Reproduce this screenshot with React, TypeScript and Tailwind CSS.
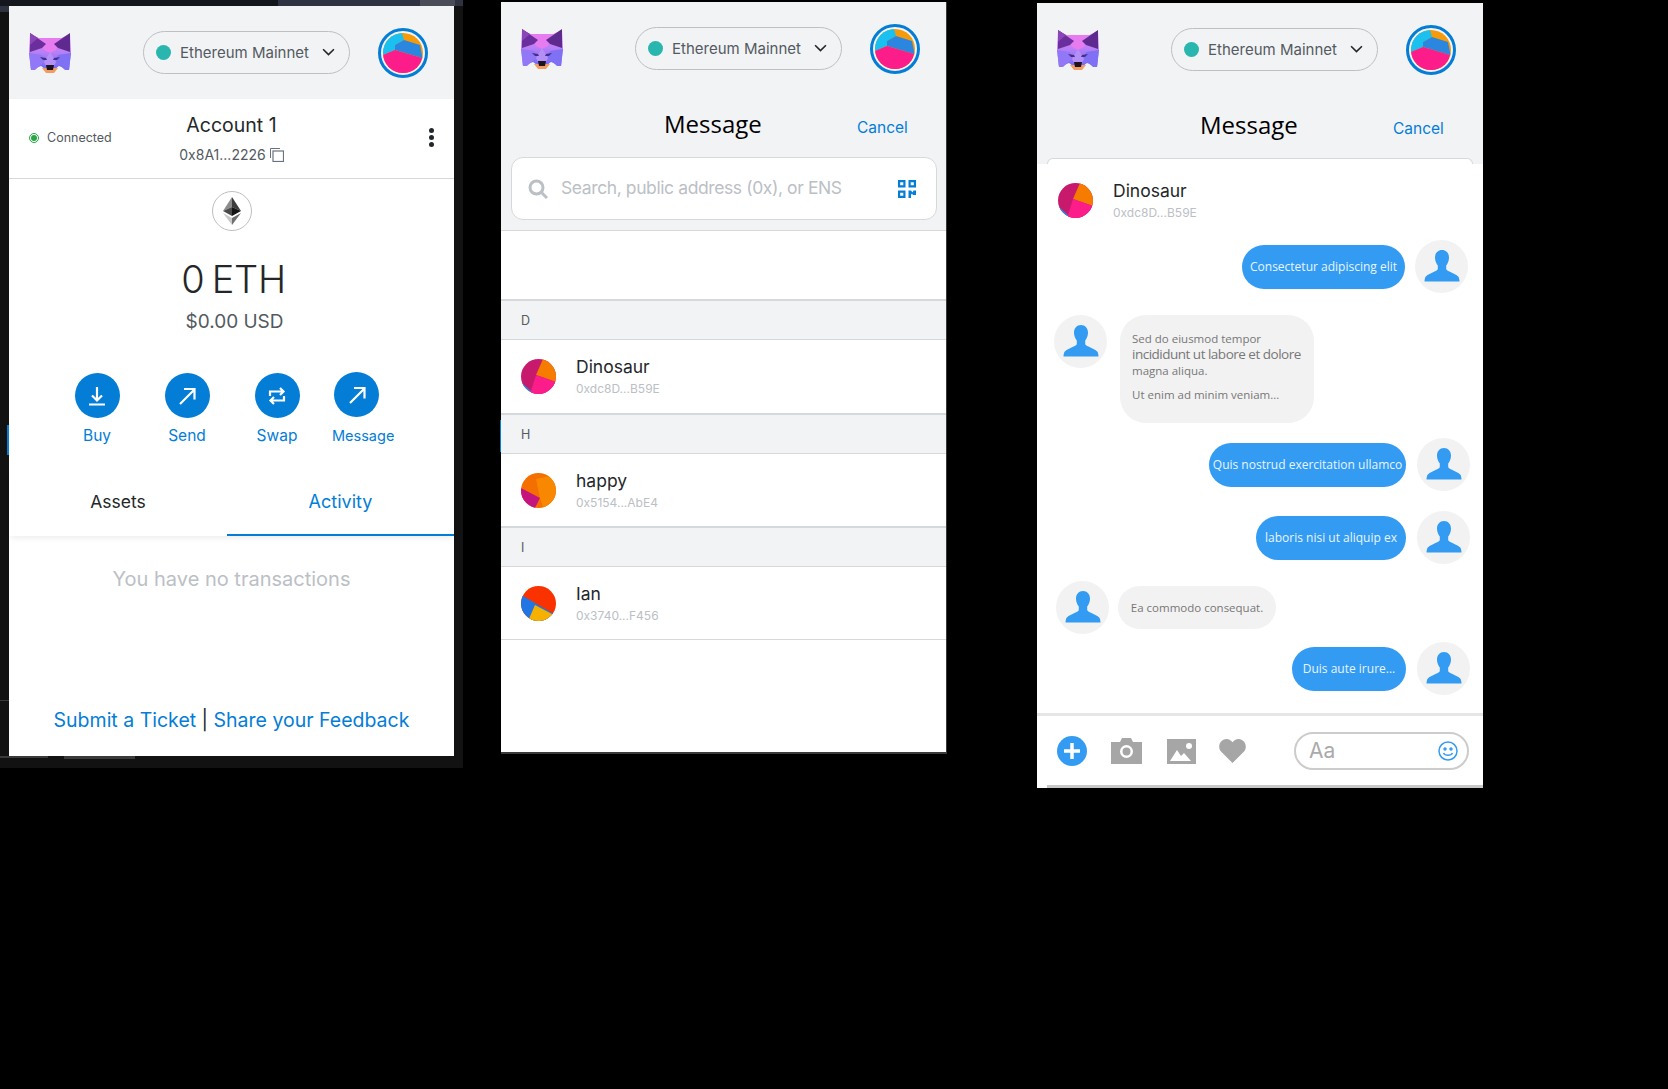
import type { ReactNode } from "react";

const SANS = "font-['Inter',sans-serif]";

function FoxLogo({ id }: { id: string }) {
  return (
    <svg viewBox="0 0 42 40" className="h-[40px] w-[42px] shrink-0">
      <defs>
        <linearGradient id={id} x1="0" y1="0" x2="0" y2="1">
          <stop offset="0" stopColor="#ee7cf0" />
          <stop offset="0.5" stopColor="#b880f6" />
          <stop offset="1" stopColor="#6d68f6" />
        </linearGradient>
      </defs>
      <polygon points="1,1 14,7 28,7 41,1 42,19 40,37 30,33 26,36 16,36 12,33 2,37 0,19" fill={`url(#${id})`} />
      <polygon points="9,5 33,5 27,17 21,20 15,17" fill="#e67cf0" />
      <polygon points="1,0 17,11 13,15 1,19" fill="#6a2f9c" />
      <polygon points="1,0 9,5 1,12" fill="#8a45b8" />
      <polygon points="41,0 25,11 29,15 41,19" fill="#5f2a90" />
      <polygon points="0,20 13,22 15,29 6,37 2,37" fill="#9278f6" />
      <polygon points="42,20 29,22 27,29 36,37 40,37" fill="#7f70f4" />
      <polygon points="15,29 21,19 27,29 25,33 17,33" fill="#b490f6" />
      <polygon points="11,24 17,25 18,27 14,27" fill="#43308c" />
      <polygon points="31,24 25,25 24,27 28,27" fill="#43308c" />
      <polygon points="13,35 29,35 25,40 17,40" fill="#f29c62" />
      <polygon points="17,32 25,32 24,37 18,37" fill="#1b1320" />
    </svg>
  );
}

function AccountIcon() {
  return (
    <div className="flex h-[50px] w-[50px] shrink-0 items-center justify-center rounded-full border-[3px] border-[#037dd6]">
      <svg viewBox="0 0 40 40" className="h-[40px] w-[40px] rounded-full">
        <rect width="40" height="40" fill="#f59a0a" />
        <polygon points="0,0 19,0 21,7 12,12 12,17 0,22" fill="#1ac0f0" />
        <polygon points="12,12 21,7 37,12 40,27 39,25 12,17" fill="#2b86e0" />
        <polygon points="0,22 12,17 39,25 35,40 0,40" fill="#fc1c8a" />
      </svg>
    </div>
  );
}

function WalletHeader({ id }: { id: string }) {
  return (
    <div className="flex h-[93px] shrink-0 items-center pl-[20px]">
      <FoxLogo id={id} />
      <div className={`ml-[72px] flex h-[43px] w-[207px] shrink-0 items-center rounded-full border border-[#bbc0c5] pl-[12px] ${SANS}`}>
        <span className="h-[15px] w-[15px] rounded-full bg-[#29b6af]" />
        <span className="ml-[9px] pt-[2px] text-[15px] text-[#535a61]">Ethereum Mainnet</span>
        <svg viewBox="0 0 12 8" className="ml-[13px] h-[9px] w-[13px]" fill="none" stroke="#24272a" strokeWidth="1.500">
          <path d="M1 1l5 5 5-5" />
        </svg>
      </div>
      <div className="ml-[28px]">
        <AccountIcon />
      </div>
    </div>
  );
}

function EthBadge() {
  return (
    <div className="flex h-[40px] w-[40px] items-center justify-center rounded-full border border-[#bbc0c5]">
      <svg viewBox="0 0 18 28" className="h-[28px] w-[18px]">
        <polygon points="9,0 0,14 9,10" fill="#8c8c8c" />
        <polygon points="9,0 18,14 9,10" fill="#3c3c3d" />
        <polygon points="0,14 9,10 9,19" fill="#4a4a4a" />
        <polygon points="18,14 9,10 9,19" fill="#141414" />
        <polygon points="0,16 9,28 9,21" fill="#c8c8c8" />
        <polygon points="18,16 9,28 9,21" fill="#6e6e6e" />
      </svg>
    </div>
  );
}

function ActionCircle({ children }: { children: ReactNode }) {
  return (
    <div className="flex h-[45px] w-[45px] items-center justify-center rounded-full bg-[#037dd6]">
      <svg viewBox="0 0 24 24" className="h-[24px] w-[24px]" fill="none" stroke="#fff" strokeWidth="2.200">
        {children}
      </svg>
    </div>
  );
}

const arrowSend = <path d="M5 20L19 6M9 5h10.500v10.500" />;

function WalletAction({ label, children }: { label: string; children: ReactNode }) {
  return (
    <div className="flex w-[90px] flex-col items-center">
      <ActionCircle>{children}</ActionCircle>
      <span className="mt-[9px] text-[15.500px] leading-[18px] text-[#037dd6]">{label}</span>
    </div>
  );
}

function WalletPanel() {
  return (
    <div className="relative h-[768px] w-[463px] shrink-0 bg-[#121212]">
      <div className="flex h-[6px]">
        <div className="w-[278px] bg-[#14161d]" />
        <div className="w-[142px] bg-[#2f3240]" />
        <div className="w-[35px] bg-[#4a4c57]" />
        <div className="w-[8px] bg-[#2f3240]" />
      </div>
      <div className="absolute left-0 top-[6px] h-[6px] w-[9px] bg-[#2f3240]" />
      <div className="absolute left-[7px] top-[425px] h-[30px] w-[2px] bg-[#037dd6]" />
      <div className="absolute left-0 top-[700px] h-px w-[9px] bg-[#3a3a3a]" />
      <div className="absolute left-0 top-[756px] h-[2px] w-[48px] bg-[#3a3a3a]" />
      <div className="absolute left-[64px] top-[756px] h-[3px] w-[71px] bg-[#3a3a3a]" />

      <div className={`ml-[9px] flex h-[750px] w-[445px] flex-col bg-white ${SANS}`}>
        <div className="bg-[#f2f3f5]">
          <WalletHeader id="fox-a" />
        </div>

        <div className="relative flex h-[80px] shrink-0 flex-col items-center border-b border-[#d6d9dc] pt-[14px]">
          <span className="text-[19.500px] leading-[24px] text-[#24272a]">Account 1</span>
          <span className="mt-[9px] flex items-center text-[14px] leading-[18px] text-[#535a61]">
            0x8A1...2226
            <svg viewBox="0 0 14 14" className="ml-[4px] h-[14px] w-[14px]" fill="none" stroke="#6a737d" strokeWidth="1">
              <path d="M.5 10V.5H10" />
              <rect x="3" y="3" width="10.500" height="10.500" strokeWidth="1.200" />
            </svg>
          </span>
          <div className="absolute left-[20px] top-[34px] flex items-center">
            <span className="flex h-[10px] w-[10px] items-center justify-center rounded-full border border-[#28a745]">
              <span className="h-[6px] w-[6px] rounded-full bg-[#28a745]" />
            </span>
            <span className="ml-[8px] text-[12.500px] leading-[10px] text-[#535a61]">Connected</span>
          </div>
          <div className="absolute left-[420px] top-[29px] flex flex-col gap-[2px]">
            <span className="h-[5px] w-[5px] rounded-full bg-[#24272a]" />
            <span className="h-[5px] w-[5px] rounded-full bg-[#24272a]" />
            <span className="h-[5px] w-[5px] rounded-full bg-[#24272a]" />
          </div>
        </div>

        <div className="flex flex-col items-center pt-[12px]">
          <EthBadge />
          <span className="ml-[4px] mt-[25px] text-[38px] font-light leading-[46px] tracking-[-0.3px] text-[#24272a] [word-spacing:-3px]">0 ETH</span>
          <span className="ml-[6px] mt-[8px] text-[19px] leading-[24px] text-[#535a61]">$0.00 USD</span>
        </div>

        <div className="mt-[39px] flex pl-[43px]">
          <WalletAction label="Buy">
            <path d="M12 3v13M7 11.500l5 5 5-5M4 20.500h16" />
          </WalletAction>
          <WalletAction label="Send">{arrowSend}</WalletAction>
          <WalletAction label="Swap">
            <path d="M5 12V7.500h12.500M15 4l3.500 3.500L15 11M19 12v4.500H6.500M9 20l-3.500-3.500L9 13" />
          </WalletAction>
          <div className="flex -translate-y-px flex-col items-start">
            <div className="ml-[12px]">
              <ActionCircle>{arrowSend}</ActionCircle>
            </div>
            <span className="ml-[10px] mt-[10px] text-[14.500px] leading-[18px] text-[#037dd6]">Message</span>
          </div>
        </div>

        <div className="mt-[24px] flex h-[66px] shrink-0 shadow-[0_4px_6px_-2px_rgba(0,0,0,0.08)]">
          <div className="flex w-[218px] items-center justify-center pb-[2px] text-[17.500px] text-[#24272a]">Assets</div>
          <div className="flex flex-1 items-center justify-center border-b-2 border-[#037dd6] pb-[2px] text-[18px] text-[#037dd6]">
            Activity
          </div>
        </div>

        <div className="mt-[30px] text-center text-[20px] leading-[26px] text-[#bbc0c5]">You have no transactions</div>

        <div className="mt-auto mb-[24px] text-center text-[19.500px] leading-[24px] text-[#037dd6]">
          Submit a Ticket <span className="text-[#24272a]">|</span> Share your Feedback
        </div>
      </div>
    </div>
  );
}

function DinoAvatar() {
  return (
    <svg viewBox="0 0 35 35" className="h-[35px] w-[35px] shrink-0 rounded-full">
      <rect width="35" height="35" fill="#c81a6d" />
      <polygon points="22,0 35,0 35,23 15,16" fill="#f67c00" />
      <polygon points="15,16 35,23 35,35 10,35 10,32" fill="#fc1c8a" />
      <polygon points="0,23 10,32 10,35 0,35" fill="#2b86e0" />
    </svg>
  );
}

function HappyAvatar() {
  return (
    <svg viewBox="0 0 35 35" className="h-[35px] w-[35px] shrink-0 rounded-full">
      <rect width="35" height="35" fill="#f56e00" />
      <polygon points="15,6 29,3 35,10 35,30 22,34 19,25" fill="#f88800" />
      <polygon points="0,15 19,25 14,35 0,35" fill="#c4147f" />
    </svg>
  );
}

function IanAvatar() {
  return (
    <svg viewBox="0 0 35 35" className="h-[35px] w-[35px] shrink-0 rounded-full">
      <rect width="35" height="35" fill="#fa3200" />
      <polygon points="2,10 33,28 35,35 0,35 0,10" fill="#2176e3" />
      <polygon points="14,19 31,28 33,35 7,35" fill="#f5b000" />
      <polygon points="33,26 35,25 33,30" fill="#e5107a" />
    </svg>
  );
}

function ContactText({ name, address }: { name: string; address: string }) {
  return (
    <div className="ml-[20px] flex flex-col">
      <span className="text-[17.500px] leading-[24px] text-[#24272a]">{name}</span>
      <span className="mt-[1px] text-[12px] leading-[18px] text-[#bbc0c5]">{address}</span>
    </div>
  );
}

function Contact({ avatar, name, address, h = "h-[72px]" }: { avatar: ReactNode; name: string; address: string; h?: string }) {
  return (
    <div className={`flex ${h} items-center pl-[20px]`}>
      {avatar}
      <ContactText name={name} address={address} />
    </div>
  );
}

function LetterRow({ letter }: { letter: string }) {
  return (
    <div className="flex h-[41px] items-center border-y border-t-2 border-[#d6d9dc] bg-[#f2f3f5] pl-[20px] pt-[2px] text-[12.500px] text-[#535a61]">
      {letter}
    </div>
  );
}

function MessageTitle() {
  return (
    <div className="flex h-[60px] items-center">
      <span className="ml-[163px] pb-[2px] font-['Open_Sans',sans-serif] text-[24px] leading-[32px] text-black">Message</span>
      <span className="absolute left-[356px] top-[114px] text-[15.500px] text-[#037dd6]">Cancel</span>
    </div>
  );
}

function ContactsPanel() {
  return (
    <div className={`relative ml-[38px] mt-[2px] flex h-[752px] w-[446px] shrink-0 flex-col border-r border-b-2 border-[#3a3a3a] bg-white ${SANS}`}>
      <div className="absolute left-[-1px] top-[418px] h-[32px] w-px bg-[#037dd6]" />
      <div className="h-[229px] shrink-0 border-b border-[#d6d9dc] bg-[#f2f3f5]">
        <WalletHeader id="fox-b" />
        <MessageTitle />
        <div className="relative ml-[10px] mt-[2px] flex h-[63px] w-[426px] items-center rounded-[12px] border border-[#d6d9dc] bg-white pl-[16px]">
          <svg viewBox="0 0 20 20" className="h-[20px] w-[20px]" fill="none" stroke="#bbc0c5" strokeWidth="3">
            <circle cx="8.500" cy="8.500" r="6.500" />
            <path d="M13 13l6 6" />
          </svg>
          <span className="ml-[13px] text-[17.500px] tracking-[-0.4px] text-[#bbc0c5]">Search, public address (0x), or ENS</span>
          <svg viewBox="0 0 18 18" className="absolute left-[386px] top-[22px] h-[18px] w-[18px]" fill="#037dd6">
            <path fillRule="evenodd" d="M0 0h7.500v7.500H0zM2.200 2.200v3.100h3.100V2.200zM10.500 0H18v7.500h-7.500zM12.700 2.200v3.100h3.100V2.200zM0 10.500h7.500V18H0zM2.200 12.700v3.100h3.100v-3.100z" />
            <path d="M10.500 10.500h2.500l1.500 2 1-2H18v4.500h-3l-1-1.500-1 1.200V18h-2.500z" />
          </svg>
        </div>
      </div>
      <div className="h-[68px] shrink-0" />
      <LetterRow letter="D" />
      <Contact avatar={<DinoAvatar />} name="Dinosaur" address="0xdc8D...B59E" h="h-[73px]" />
      <LetterRow letter="H" />
      <Contact avatar={<HappyAvatar />} name="happy" address="0x5154...AbE4" />
      <LetterRow letter="I" />
      <Contact avatar={<IanAvatar />} name="Ian" address="0x3740...F456" />
      <div className="border-t border-[#d6d9dc]" />
    </div>
  );
}

function PersonBadge() {
  return (
    <div className="flex h-[53px] w-[53px] shrink-0 items-center justify-center rounded-full bg-[#f2f2f2]">
      <svg viewBox="0 0 36 36" className="h-[36px] w-[36px]" fill="#339cf2">
        <path d="M18 1c4.200 0 7 3.200 7 7.500 0 3.400-1.300 6-2.800 8v3.500c0 2 7.500 3.500 12 7.500 1 1 1.300 4 1.300 5H.5c0-1 .3-4 1.300-5 4.500-4 12-5.500 12-7.500v-3.500C12.300 14.500 11 11.900 11 8.500 11 4.200 13.800 1 18 1z" />
      </svg>
    </div>
  );
}

function Sent({ text, w, row }: { text: string; w: string; row: string }) {
  return (
    <div className={`flex items-center justify-end ${row}`}>
      <div className={`flex h-[44px] ${w} items-center justify-center whitespace-nowrap rounded-full bg-[#339cf2] font-['Open_Sans',sans-serif] text-[12px] text-[#e8f4ff]`}>
        {text}
      </div>
      <PersonBadge />
    </div>
  );
}

function ChatPanel() {
  return (
    <div className={`relative ml-[90px] mt-[3px] flex h-[785px] w-[446px] shrink-0 flex-col bg-white ${SANS}`}>
      <div className="h-[161px] shrink-0 bg-[#f2f3f5]">
        <WalletHeader id="fox-c" />
        <MessageTitle />
        <div className="mx-[10px] mt-[2px] h-[6px] rounded-t-[10px] border-x border-t border-[#d6d9dc] bg-white" />
      </div>

      <div className="flex h-[69px] shrink-0 items-center pl-[21px] pt-[4px]">
        <DinoAvatar />
        <ContactText name="Dinosaur" address="0xdc8D...B59E" />
      </div>

      <Sent text="Consectetur adipiscing elit" w="w-[163px]" row="mt-[7px] gap-[10px] pr-[15px]" />

      <div className="mt-[22px] flex items-start gap-[13px] pl-[17px]">
        <PersonBadge />
        <div className="flex h-[108px] w-[194px] flex-col justify-center rounded-[26px] bg-[#f2f2f2] pb-[6px] pl-[12px] font-['Open_Sans',sans-serif] text-[#777]">
          <span className="text-[11.500px] leading-[15px]">Sed do eiusmod tempor</span>
          <span className="text-[13.500px] leading-[17px] tracking-[-0.5px]">incididunt ut labore et dolore</span>
          <span className="text-[11.500px] leading-[15px]">magna aliqua.</span>
          <span className="mt-[9px] text-[11.500px] leading-[15px]">Ut enim ad minim veniam...</span>
        </div>
      </div>

      <Sent text="Quis nostrud exercitation ullamco" w="w-[197px]" row="mt-[15px] gap-[11px] pr-[13px]" />
      <Sent text="laboris nisi ut aliquip ex" w="w-[150px]" row="mt-[20px] gap-[11px] pr-[13px]" />

      <div className="mt-[17px] flex items-center gap-[9px] pl-[19px]">
        <PersonBadge />
        <div className="flex h-[43px] w-[158px] items-center justify-center rounded-full bg-[#f2f2f2] font-['Open_Sans',sans-serif] text-[11.500px] text-[#777]">
          Ea commodo consequat.
        </div>
      </div>

      <Sent text="Duis aute irure..." w="w-[114px]" row="mt-[8px] gap-[11px] pr-[13px]" />

      <div className="mt-[18px] flex h-[73px] shrink-0 items-center border-t-[3px] border-[#e6e6e6] pl-[20px]">
        <svg viewBox="0 0 30 30" className="h-[30px] w-[30px] shrink-0">
          <circle cx="15" cy="15" r="15" fill="#339cf2" />
          <path d="M15 7v16M7 15h16" stroke="#fff" strokeWidth="3.500" />
        </svg>
        <svg viewBox="0 0 31 26" className="ml-[24px] h-[26px] w-[31px] shrink-0">
          <path fillRule="evenodd" fill="#a6a6a6" d="M0 4h9l2-4h9l2 4h9v22H0zM15.500 7a6.500 6.500 0 100 13 6.500 6.500 0 000-13zM15.500 9.500a4 4 0 110 8 4 4 0 010-8z" />
        </svg>
        <svg viewBox="0 0 29 25" className="ml-[25px] h-[25px] w-[29px] shrink-0">
          <rect width="29" height="25" fill="#a6a6a6" />
          <path d="M3 22l7-11 4 6 3-3 7 8z" fill="#fff" />
          <circle cx="22" cy="7" r="3" fill="#fff" />
        </svg>
        <svg viewBox="0 0 27 24" className="ml-[23px] h-[24px] w-[27px] shrink-0" fill="#a6a6a6">
          <path d="M13.500 24L2 12.500C-2 8 1 0 7.500 0c2.500 0 4.700 1.300 6 3.200C14.800 1.300 17 0 19.500 0 26 0 29 8 25 12.500z" />
        </svg>
        <div className="ml-[48px] flex h-[38px] w-[175px] shrink-0 items-center justify-between rounded-full border-2 border-[#cccccc] pl-[13px] pr-[9px]">
          <span className="text-[21px] text-[#aaaaaa]">Aa</span>
          <svg viewBox="0 0 20 20" className="h-[20px] w-[20px]" fill="none" stroke="#339cf2" strokeWidth="1.500">
            <circle cx="10" cy="10" r="9" />
            <circle cx="7" cy="8" r="1" fill="#339cf2" />
            <circle cx="13" cy="8" r="1" fill="#339cf2" />
            <path d="M5.500 12c1.500 3 7.500 3 9 0" />
          </svg>
        </div>
      </div>
      <div className="absolute bottom-0 left-[10px] right-0 h-[3px] bg-[#c8c8c8]" />
    </div>
  );
}

export default function App() {
  return (
    <div className="flex min-h-[1089px] items-start overflow-hidden bg-black">
      <WalletPanel />
      <ContactsPanel />
      <ChatPanel />
    </div>
  );
}
